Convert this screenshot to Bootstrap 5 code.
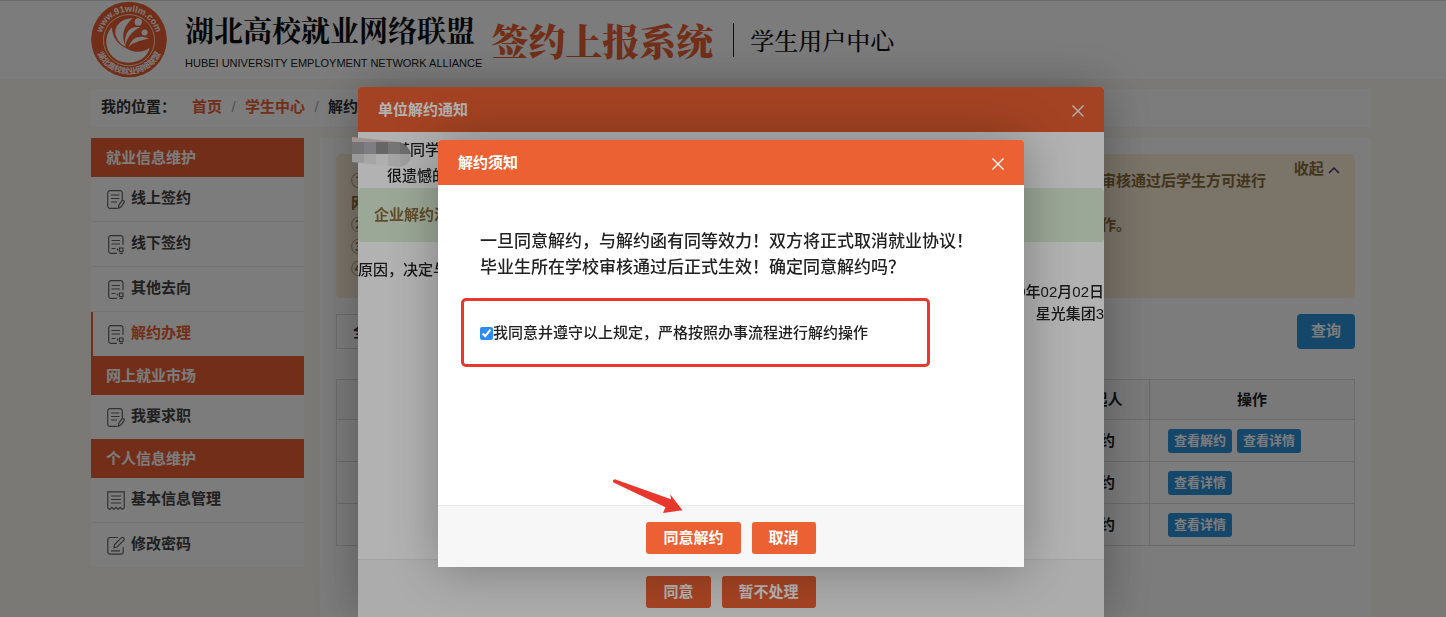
<!DOCTYPE html>
<html lang="zh-CN">
<head>
<meta charset="utf-8">
<meta name="viewport" content="width=device-width, initial-scale=1">
<title>签约上报系统 - 学生用户中心</title>
<link href="https://cdn.jsdelivr.net/npm/bootstrap@5.3.0/dist/css/bootstrap.min.css" rel="stylesheet">
<style>
  :root { --brand: #eb6133; --info-blue: #2d93dc; }
  body { font-family: "Liberation Sans", "Noto Sans CJK SC", sans-serif; font-size: 15px; font-weight: 500; line-height: 22px; color: #333; background: #fbf9f3; overflow: hidden; height: 100vh; }
  a { text-decoration: none; color: inherit; }
  .shell { padding-left: 91px; padding-right: 75px; }
  .site-header { background: #fff; border-top: 1px solid #ddd; height: 79px; flex: none; }
  .brand-block { margin-left: 18px; padding-top: 11px; }
  .brand-cn { font-family: "Noto Serif CJK SC", "Liberation Serif", "Noto Sans CJK SC", serif; font-size: 29px; font-weight: 700; line-height: 36px; color: #111; white-space: nowrap; }
  .brand-en { font-size: 11px; font-weight: 400; line-height: 14px; margin-top: 8px; color: #222; white-space: nowrap; }
  .system-block { margin-left: 9px; }
  .system-name { font-family: "Noto Serif CJK SC", "Liberation Serif", "Noto Sans CJK SC", serif; font-size: 37px; font-weight: 900; line-height: 48px; color: var(--brand); white-space: nowrap; }
  .center-name { font-family: "Noto Serif CJK SC", "Liberation Serif", "Noto Sans CJK SC", serif; font-size: 24px; font-weight: 500; line-height: 34px; color: #111; border-left: 1px solid #222; white-space: nowrap; padding-left: 16px; margin-left: 20px; }
  .page { padding-top: 10px; min-height: 0; }
  .crumbs { background: #fff; height: 38px; padding: 0 10px 2px; flex: none; font-weight: 700; }
  .crumbs a { color: var(--brand); }
  .crumbs .slash { color: #aaa; width: 23px; text-align: center; font-weight: 400; }
  .columns { margin-top: 11px; min-height: 0; }
  .side { width: 213px; flex: none; font-weight: 700; }
  .side h2 { background: var(--brand); color: #fff; font-size: 15px; font-weight: 700; line-height: 39px; padding-left: 15px; margin: 0; }
  .side ul { background: #fff; margin: 0; }
  .side li + li { border-top: 1px solid #ececec; }
  .side li a { height: 44px; padding: 0 16px 2px; gap: 6px; color: #444; }
  .side li svg { width: 18px; height: 19px; margin-top: 3px; fill: none; stroke: #666; stroke-width: 1.2; }
  .side li a.current { color: var(--brand); box-shadow: inset 2px 0 0 var(--brand); }
  .panel { background: #fff; padding: 16px; min-width: 0; }
  .tips { background: #fbeed8; color: #8a6d3b; border-radius: 5px; padding: 16px 15px 18px; font-weight: 700; }
  .tips p { margin: 0; white-space: nowrap; }
  .tips .fold { line-height: 16px; margin-top: -9px; white-space: nowrap; }
  .filter { margin: 16px 0 30px; }
  .filter select { width: 180px; height: 35px; border: 1px solid #ddd; border-radius: 0; background: #fff; font-size: 15px; font-weight: 700; padding: 0 12px; color: #333; }
  .btn-blue { background: var(--info-blue); color: #fff; border: 0; border-radius: 4px; font-size: 15px; font-weight: 700; }
  .btn-query { width: 58px; height: 35px; padding: 0; }
  .btn-tiny { font-size: 13px; line-height: 24px; padding: 0 6px; border-radius: 3px; }
  .records { table-layout: fixed; margin: 0; --bs-table-color: #222; border-color: #ddd; font-weight: 700; }
  .records th { font-weight: 700; height: 40px; padding: 0; text-align: center; vertical-align: middle; background: #fafafa; }
  .records td { height: 42px; padding: 0; text-align: center; vertical-align: middle; }
  .records td.acts { text-align: left; padding-left: 18px; }
  .records .acts .btn + .btn { margin-left: 5px; }
  .col-acts { width: 205px; } .col-from { width: 99px; }

  .veil { --bs-backdrop-opacity: .3; }
  .veil-top { --bs-backdrop-zindex: 1060; }
  .modal { padding-left: 16px; }
  .layer-top { --bs-modal-zindex: 1070; }
  .modal-dialog { margin: 87px auto 0; max-width: 746px; }
  .layer-top .modal-dialog { margin-top: 140px; max-width: 586px; }
  .modal-content { border: 0; border-radius: 3px 3px 0 0; box-shadow: 1px 1px 50px rgba(0,0,0,.3); color: #222; }
  .modal-header { background: var(--brand); color: #fff; height: 45px; padding: 0 20px; border: 0; border-radius: 3px 3px 0 0; }
  .modal-title { font-size: 15px; font-weight: 700; line-height: 22px; }
  .shut { background: none; border: 0; padding: 0; line-height: 0; }
  .shut svg { stroke: #fff; stroke-width: 1.4; fill: none; margin-top: 2px; }
  .modal-body { padding: 0; }
  .modal-footer { background: #f7f7f7; border-top: 1px solid #eaeaea; border-radius: 0; gap: 11px; padding: 16px 0 13px; }
  .modal-footer > * { margin: 0; }
  .notice + .modal-footer { padding-bottom: 9px; }
  .btn-brand { background: var(--brand); color: #fff; border: 0; border-radius: 3px; font-size: 15px; font-weight: 700; line-height: 32px; padding: 0 17px; }
  .notice { height: 427px; overflow: hidden; white-space: nowrap; }
  .notice .who { padding: 6px 0 0 37px; line-height: 24px; }
  .notice .sorry { padding: 2px 0 0 29px; line-height: 24px; }
  .notice .band { background: #dff0d8; color: #8a6d3b; border-radius: 4px; padding: 16px; margin-bottom: 17px; font-weight: 700; }
  .mosaic { position: absolute; left: -6px; top: 49px; }
  .confirm { min-height: 320px; padding-top: 44px; }
  .confirm p { font-size: 17px; line-height: 26px; margin: 0 42px 17px; white-space: nowrap; }
  .agree { border: 3px solid #e8382d; border-radius: 5px; width: 469px; height: 69px; margin-left: 23px; padding-left: 16px; white-space: nowrap; }
  .agree input { width: 13px; height: 13px; margin: 1px 0 0; accent-color: #2f8bf5; }
  .pointer-arrow { position: absolute; left: 174px; top: 338px; }
</style>
</head>
<body class="d-flex flex-column">
<svg class="d-none" xmlns="http://www.w3.org/2000/svg">
  <symbol id="i-pen" viewBox="0 0 18 19"><path d="M15.3 10V3a2.300 2.300 0 0 0-2.300-2.300H3A2.300 2.300 0 0 0 .7 3v13A2.300 2.300 0 0 0 3 18.300h7.500M4 5h8.500M4 8.500h8.500M4 12h6M11.500 18.200l.3-3 3-4.400c1-1 3 .2 2.300 1.600l-3 4.400z"/></symbol>
  <symbol id="i-box" viewBox="0 0 18 19"><path d="M16 10V3A2.300 2.300 0 0 0 13.700.7H4A2.300 2.300 0 0 0 1.700 3v13A2.300 2.300 0 0 0 4 18.300h6M4.500 5.500H13M4.500 9H13M4.500 13.500h4M12.500 13h3.500v3.500h-3.500zM10.500 13.500v2M12.500 18.300H16"/></symbol>
  <symbol id="i-bill" viewBox="0 0 18 19"><path d="M.8 17V.8h16.400V17l-2 1.300-2.100-2-2 2-2.100-2-2 2-2.100-2-2 2zM4 5h10M4 8.500h10M4 12h10"/></symbol>
  <symbol id="i-edit" viewBox="0 0 18 19"><path d="M11 1.500H3A2.200 2.200 0 0 0 .8 3.700v12A2.200 2.200 0 0 0 3 18.100h11a2.200 2.200 0 0 0 2.200-2.200V11M4 14.800h9M7 11.800l.6-3.300L14.500 1.600c1.200-1 3.500 1 2.400 2.500L10 11z"/></symbol>
</svg>

<header class="site-header shell d-flex">
  <svg width="76" height="77" viewBox="18 3 228 232" class="flex-shrink-0" role="img" aria-label="湖北高校就业网络联盟">
    <defs>
      <path id="arcTop" d="M48 119a84 84 0 0 1 168 0"/>
      <path id="arcBottom" d="M28 119a104 104 0 0 0 208 0"/>
    </defs>
    <circle cx="132" cy="119" r="114" fill="#eb6133"/>
    <circle cx="132" cy="121" r="77" fill="none" stroke="#ffe3b8" stroke-width="3"/>
    <g fill="#fff">
      <circle cx="160" cy="66" r="11"/><circle cx="179" cy="98" r="9"/>
      <path d="M80 82c-30 34-18 93 34 105 44 9 76-17 80-43-15 12-40 17-62 6-30-14-48-30-52-68z"/>
      <path d="M143 54c-40 2-60 31-49 57 6 16 16 25 29 30-16-32-9-60 20-87z"/>
      <path d="M166 82c-34-4-49 18-45 54 7-26 20-42 45-54z"/>
      <path d="M192 116c-32-12-50-3-61 26 14-16 36-19 61-26z"/>
    </g>
    <g fill="#fff" font-family="Liberation Sans, Noto Sans CJK SC, sans-serif" font-weight="700" text-anchor="middle">
      <text font-size="27"><textPath href="#arcTop" startOffset="50%">www.91wllm.com</textPath></text>
      <text font-size="24"><textPath href="#arcBottom" startOffset="50%">湖北高校就业网络联盟</textPath></text>
    </g>
  </svg>
  <div class="brand-block">
    <div class="brand-cn">湖北高校就业网络联盟</div>
    <div class="brand-en">HUBEI UNIVERSITY EMPLOYMENT NETWORK ALLIANCE</div>
  </div>
  <div class="system-block d-flex align-items-center">
    <div class="system-name">签约上报系统</div>
    <div class="center-name">学生用户中心</div>
  </div>
</header>

<div class="page shell flex-fill d-flex flex-column">
  <nav class="crumbs d-flex align-items-center text-nowrap" aria-label="我的位置">
    <span class="me-3">我的位置：</span>
    <a href="#">首页</a><span class="slash">/</span>
    <a href="#">学生中心</a><span class="slash">/</span>
    <span>解约中</span>
  </nav>
  <div class="columns flex-fill d-flex gap-3">
    <aside class="side">
      <h2>就业信息维护</h2>
      <ul class="list-unstyled">
        <li><a href="#" class="d-flex align-items-center"><svg><use href="#i-pen"/></svg>线上签约</a></li>
        <li><a href="#" class="d-flex align-items-center"><svg><use href="#i-box"/></svg>线下签约</a></li>
        <li><a href="#" class="d-flex align-items-center"><svg><use href="#i-box"/></svg>其他去向</a></li>
        <li><a href="#" class="d-flex align-items-center current"><svg><use href="#i-box"/></svg>解约办理</a></li>
      </ul>
      <h2>网上就业市场</h2>
      <ul class="list-unstyled">
        <li><a href="#" class="d-flex align-items-center"><svg><use href="#i-pen"/></svg>我要求职</a></li>
      </ul>
      <h2>个人信息维护</h2>
      <ul class="list-unstyled">
        <li><a href="#" class="d-flex align-items-center"><svg><use href="#i-bill"/></svg>基本信息管理</a></li>
        <li><a href="#" class="d-flex align-items-center"><svg><use href="#i-edit"/></svg>修改密码</a></li>
      </ul>
    </aside>
    <main class="panel flex-fill">
      <div class="tips d-flex justify-content-between">
        <div>
          <p>①学生与单位签订就业协议后如需解除协议须先由学生或者单位在系统内发起解约申请并上传解约函等材料经学校审核通过后学生方可进行</p>
          <p>网上签约等后续操作。</p>
          <p>②单位发起解约申请后学生需要登录系统在解约办理页面查看单位解约通知内容并选择同意解约或者暂不处理的操作。</p>
          <p>③学生发起解约申请后需等待单位处理。</p>
          <p>④解约完成后原就业协议自动失效。</p>
        </div>
        <a href="#" class="fold">收起 <svg width="12" height="8" viewBox="0 0 12 8" fill="none" stroke="#4b2e83" stroke-width="1.500"><path d="M1 7l5-5 5 5"/></svg></a>
      </div>
      <form class="filter d-flex justify-content-between">
        <select aria-label="状态"><option>全部</option></select>
        <button type="button" class="btn btn-blue btn-query">查询</button>
      </form>
      <table class="records table table-bordered">
        <colgroup><col><col><col><col class="col-from"><col class="col-acts"></colgroup>
        <thead><tr><th>单位名称</th><th>申请时间</th><th>审核状态</th><th>发起人</th><th>操作</th></tr></thead>
        <tbody>
          <tr><td>星光集团</td><td>2020-02-02</td><td>待处理</td><td>解约</td><td class="acts"><button class="btn btn-blue btn-tiny">查看解约</button><button class="btn btn-blue btn-tiny">查看详情</button></td></tr>
          <tr><td>星光集团</td><td>2020-02-02</td><td>已处理</td><td>解约</td><td class="acts"><button class="btn btn-blue btn-tiny">查看详情</button></td></tr>
          <tr><td>星光集团</td><td>2020-02-02</td><td>已处理</td><td>解约</td><td class="acts"><button class="btn btn-blue btn-tiny">查看详情</button></td></tr>
        </tbody>
      </table>
    </main>
  </div>
</div>

<div class="modal-backdrop show veil"></div>
<div class="modal show d-block" role="dialog" aria-labelledby="noticeTitle">
  <div class="modal-dialog">
    <div class="modal-content">
      <div class="modal-header">
        <h5 class="modal-title" id="noticeTitle">单位解约通知</h5>
        <button class="shut" aria-label="关闭"><svg width="12" height="12" viewBox="0 0 12 12"><path d="M.5.5l11 11M11.500.5l-11 11"/></svg></button>
      </div>
      <div class="modal-body notice">
        <div class="who">某同学</div>
        <div class="sorry">很遗憾的</div>
        <div class="band">企业解约流程</div>
        <div>原因，决定与</div>
        <div class="text-end">2020年02月02日</div>
        <div class="text-end">星光集团3</div>
      </div>
      <div class="modal-footer justify-content-center">
        <button class="btn btn-brand">同意</button>
        <button class="btn btn-brand">暂不处理</button>
      </div>
      <svg class="mosaic" width="59" height="32" viewBox="0 0 59 32" aria-hidden="true">
        <clipPath id="smear"><path d="M0 1l48 5q11 5 11 14t-12 11L0 26z"/></clipPath>
        <g clip-path="url(#smear)">
          <path fill="#e6d2ce" d="M0 0h59v6H0z"/>
          <path fill="#a7a7a7" d="M0 6h12v12H0z"/><path fill="#b5b5bb" d="M12 6h12v12H12z"/><path fill="#929292" d="M24 6h12v12H24z"/><path fill="#aaa" d="M36 6h12v12H36z"/><path fill="#9d9d9d" d="M48 6h11v12H48z"/>
          <path fill="#dcdcdc" d="M0 18h12v14H0z"/><path fill="#ececec" d="M12 18h12v14H12z"/><path fill="#fbfbfb" d="M24 18h12v14H24z"/><path fill="#ededed" d="M36 18h12v14H36z"/><path fill="#e4e4e4" d="M48 18h11v14H48z"/>
        </g>
      </svg>
    </div>
  </div>
</div>

<div class="modal-backdrop show veil veil-top"></div>
<div class="modal show d-block layer-top" role="dialog" aria-labelledby="confirmTitle">
  <div class="modal-dialog">
    <div class="modal-content">
      <div class="modal-header">
        <h5 class="modal-title" id="confirmTitle">解约须知</h5>
        <button class="shut" aria-label="关闭"><svg width="12" height="12" viewBox="0 0 12 12"><path d="M.5.5l11 11M11.500.5l-11 11"/></svg></button>
      </div>
      <div class="modal-body confirm">
        <p>一旦同意解约，与解约函有同等效力！双方将正式取消就业协议！<br>毕业生所在学校审核通过后正式生效！确定同意解约吗？</p>
        <div class="agree d-flex align-items-center">
          <input type="checkbox" id="agree" checked><label for="agree">我同意并遵守以上规定，严格按照办事流程进行解约操作</label>
        </div>
      </div>
      <div class="modal-footer justify-content-center">
        <button class="btn btn-brand">同意解约</button>
        <button class="btn btn-brand">取消</button>
      </div>
      <svg class="pointer-arrow" width="72" height="36" viewBox="0 0 72 36" aria-hidden="true"><path fill="#e8382d" d="M2.800 1.200L59 21.300 58.300 16.500 70.500 32.300 51 35 53.500 29.200 1.500 4.600Q-.2 2 2.800 1.200z"/></svg>
    </div>
  </div>
</div>
<script src="https://cdn.jsdelivr.net/npm/bootstrap@5.3.0/dist/js/bootstrap.bundle.min.js"></script>
</body>
</html>
